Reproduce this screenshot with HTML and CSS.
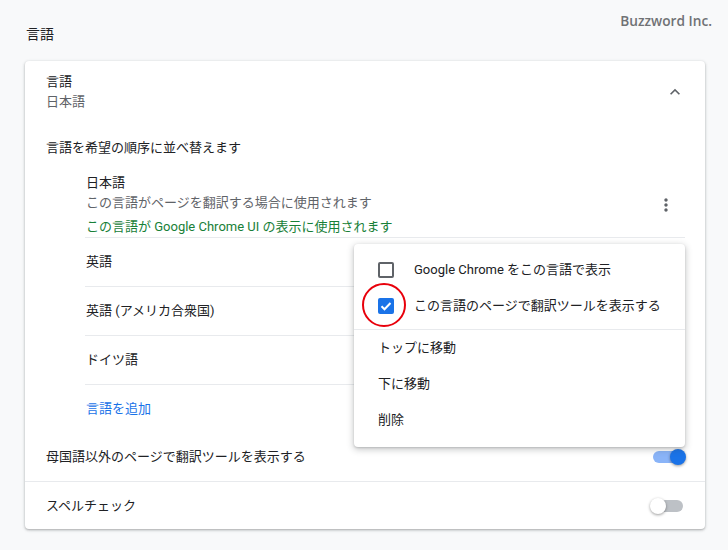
FILE: index.html
```html
<!DOCTYPE html>
<html lang="ja">
<head>
<meta charset="utf-8">
<title>言語</title>
<link rel="stylesheet" href="styles.css">
</head>
<body>
<div class="page">
  <div class="topbar">
    <h1 class="page-title">言語</h1>
    <div class="brand">Buzzword Inc.</div>
  </div>

  <section class="card">
    <div class="card-header">
      <div class="header-text">
        <div class="primary">言語</div>
        <div class="secondary">日本語</div>
      </div>
      <svg class="chevron" width="20" height="20" viewBox="0 0 24 24"><path d="M12 8l-6 6 1.41 1.41L12 10.83l4.59 4.58L18 14z" fill="#5f6368"/></svg>
    </div>

    <div class="section-label">言語を希望の順序に並べ替えます</div>

    <ul class="lang-list">
      <li class="lang-item lang-first">
        <div class="lang-info">
          <div class="primary">日本語</div>
          <div class="secondary">この言語がページを翻訳する場合に使用されます</div>
          <div class="ui-note">この言語が Google Chrome UI の表示に使用されます</div>
        </div>
        <svg class="kebab" width="20" height="20" viewBox="0 0 24 24"><path d="M12 8c1.1 0 2-.9 2-2s-.9-2-2-2-2 .9-2 2 .9 2 2 2zm0 2c-1.1 0-2 .9-2 2s.9 2 2 2 2-.9 2-2-.9-2-2-2zm0 6c-1.1 0-2 .9-2 2s.9 2 2 2 2-.9 2-2-.9-2-2-2z" fill="#5f6368"/></svg>
      </li>
      <li class="lang-item">英語</li>
      <li class="lang-item">英語 (アメリカ合衆国)</li>
      <li class="lang-item">ドイツ語</li>
      <li class="lang-item add-link">言語を追加</li>
    </ul>

    <div class="toggle-row">
      <span>母国語以外のページで翻訳ツールを表示する</span>
      <span class="toggle on"><span class="track"></span><span class="knob"></span></span>
    </div>
    <div class="toggle-row bordered">
      <span>スペルチェック</span>
      <span class="toggle"><span class="track"></span><span class="knob"></span></span>
    </div>
  </section>

  <div class="menu">
    <div class="menu-item">
      <span class="checkbox"></span>
      <span>Google Chrome をこの言語で表示</span>
    </div>
    <div class="menu-item">
      <span class="checkbox checked"><svg width="16" height="16" viewBox="0 0 16 16"><path d="M3.5 8.2l3 3 6-6.2" fill="none" stroke="#fff" stroke-width="2"/></svg></span>
      <span>この言語のページで翻訳ツールを表示する</span>
    </div>
    <div class="menu-divider"></div>
    <div class="menu-item plain">トップに移動</div>
    <div class="menu-item plain">下に移動</div>
    <div class="menu-item plain">削除</div>
    <div class="highlight-ring"></div>
  </div>
</div>
</body>
</html>
```

FILE: styles.css
```css
* { box-sizing: border-box; }
html, body { margin: 0; padding: 0; }
body {
  background: #f8f9fa;
  font-family: Roboto, "Noto Sans CJK JP", sans-serif;
  font-size: 13px;
  line-height: 20px;
  color: #202124;
}
.page {
  position: relative;
  width: 728px;
  height: 550px;
  overflow: hidden;
}
.topbar {
  height: 61px;
  display: flex;
  justify-content: space-between;
  align-items: flex-start;
}
.page-title {
  margin: 0;
  padding: 24px 0 0 26px;
  font-size: 14px;
  font-weight: 400;
  line-height: 20px;
  color: #202124;
}
.brand {
  padding: 11px 16px 0 0;
  font-family: "Open Sans", sans-serif;
  font-weight: 600;
  font-size: 13.7px;
  color: #707275;
}
.card {
  margin: 0 23px 0 25px;
  height: 468px;
  background: #fff;
  border-radius: 4px;
  box-shadow: 0 1px 2px rgba(60,64,67,.3), 0 1px 3px 1px rgba(60,64,67,.12);
}
.card-header {
  display: flex;
  align-items: center;
  justify-content: space-between;
  padding: 11px 20px 0 21px;
}
.secondary { color: #5f6368; }
.chevron { display: block; }
.section-label {
  margin-top: 26px;
  padding-left: 21px;
}
.lang-list {
  list-style: none;
  margin: 0 20px 0 60px;
  padding: 0;
}
.lang-item {
  height: 49px;
  padding-left: 1px;
  display: flex;
  align-items: center;
  border-bottom: 1px solid #e8eaed;
}
.lang-first {
  height: 80px;
  padding-top: 15px;
  align-items: stretch;
  justify-content: space-between;
}
.ui-note {
  margin-top: 4px;
  color: #188038;
}
.kebab {
  align-self: center;
  margin: 0 9px 0 0;
}
.add-link {
  height: 48px;
  border-bottom: none;
  color: #1a73e8;
}
.toggle-row {
  height: 48px;
  display: flex;
  align-items: center;
  justify-content: space-between;
  padding: 0 19px 0 21px;
}
.toggle-row.bordered { border-top: 1px solid #e8eaed; }
.toggle {
  position: relative;
  width: 36px;
  height: 16px;
}
.toggle .track {
  position: absolute;
  left: 3px;
  top: 2px;
  width: 30px;
  height: 12px;
  border-radius: 6px;
  background: #bdc1c6;
}
.toggle .knob {
  position: absolute;
  left: 0;
  top: 0;
  width: 16px;
  height: 16px;
  border-radius: 50%;
  background: #fff;
  box-shadow: 0 1px 3px rgba(0,0,0,.4);
}
.toggle.on .track { background: #8ab4f8; }
.toggle.on .knob { left: 20px; background: #1a73e8; }

.menu {
  position: absolute;
  left: 354px;
  top: 244px;
  width: 331px;
  height: 203px;
  padding: 8px 0 9px;
  background: #fff;
  border-radius: 4px;
  box-shadow: 0 2px 6px 1px rgba(60,64,67,.25), 0 1px 2px rgba(60,64,67,.2);
}
.menu-item {
  height: 36px;
  display: flex;
  align-items: center;
  padding-left: 24px;
  color: #202124;
}
.checkbox {
  width: 16px;
  height: 16px;
  margin-right: 20px;
  border: 2px solid #5f6368;
  border-radius: 2px;
  flex: none;
  display: flex;
}
.checkbox.checked {
  border: none;
  background: #1a73e8;
}
.menu-divider {
  margin-top: 5px;
  height: 1px;
  background: #e8eaed;
}
.highlight-ring {
  position: absolute;
  left: 8px;
  top: 39px;
  width: 44px;
  height: 44px;
  border: 2px solid #e8000b;
  border-radius: 50%;
}
```
